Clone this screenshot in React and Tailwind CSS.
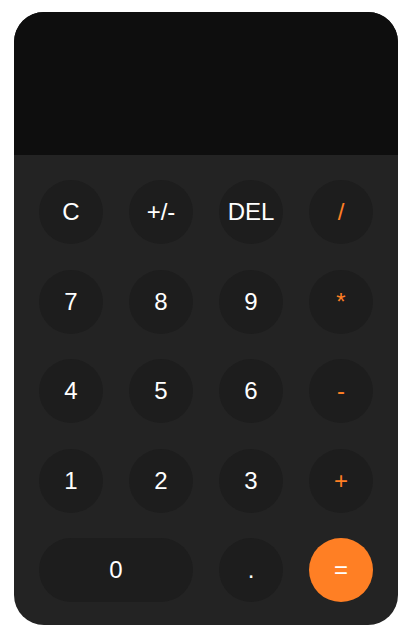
import React, { useState } from 'react';

const keys = [
  { label: 'C', type: 'fn' },
  { label: '+/-', type: 'fn' },
  { label: 'DEL', type: 'fn' },
  { label: '/', type: 'op' },
  { label: '7' },
  { label: '8' },
  { label: '9' },
  { label: '*', type: 'op' },
  { label: '4' },
  { label: '5' },
  { label: '6' },
  { label: '-', type: 'op' },
  { label: '1' },
  { label: '2' },
  { label: '3' },
  { label: '+', type: 'op' },
  { label: '0', wide: true },
  { label: '.' },
  { label: '=', type: 'eq' },
];

const Key = ({ k, onPress }) => {
  let cls = 'bg-[#1d1d1d] text-white';
  if (k.type === 'op') cls = 'bg-[#1d1d1d] text-[#ff7f24]';
  if (k.type === 'eq') cls = 'bg-[#ff7f24] text-white';

  return (
    <button
      onClick={() => onPress(k.label)}
      className={`h-16 justify-self-center rounded-full flex items-center justify-center text-2xl ${
        k.wide ? 'col-span-2 w-[154px]' : 'w-16'
      } ${cls}`}
    >
      {k.label}
    </button>
  );
};

export default function App() {
  const [display, setDisplay] = useState('');

  const press = (v) => {
    if (v === 'C') return setDisplay('');
    if (v === 'DEL') return setDisplay((d) => d.slice(0, -1));
    if (v === '+/-') return setDisplay((d) => (d.startsWith('-') ? d.slice(1) : d ? '-' + d : d));
    if (v === '=') {
      try {
        // eslint-disable-next-line no-new-func
        const r = Function(`return (${display})`)();
        setDisplay(String(r));
      } catch {
        setDisplay('');
      }
      return;
    }
    setDisplay((d) => d + v);
  };

  return (
    <div className="w-[412px] h-[642px] bg-white pt-3 pl-[14px]" style={{ fontFamily: '"Liberation Sans", Arial, sans-serif' }}>
      <div className="w-[384px] h-[613px] rounded-[30px] overflow-hidden bg-[#232323] flex flex-col">
        <div className="h-[143px] bg-[#0e0e0e] flex items-end justify-end px-6 pb-4 text-white text-5xl">
          {display}
        </div>
        <div className="grid grid-cols-4 gap-x-6 gap-y-[25.5px] px-6 pt-[25px]">
          {keys.map((k) => (
            <Key key={k.label} k={k} onPress={press} />
          ))}
        </div>
      </div>
    </div>
  );
}
